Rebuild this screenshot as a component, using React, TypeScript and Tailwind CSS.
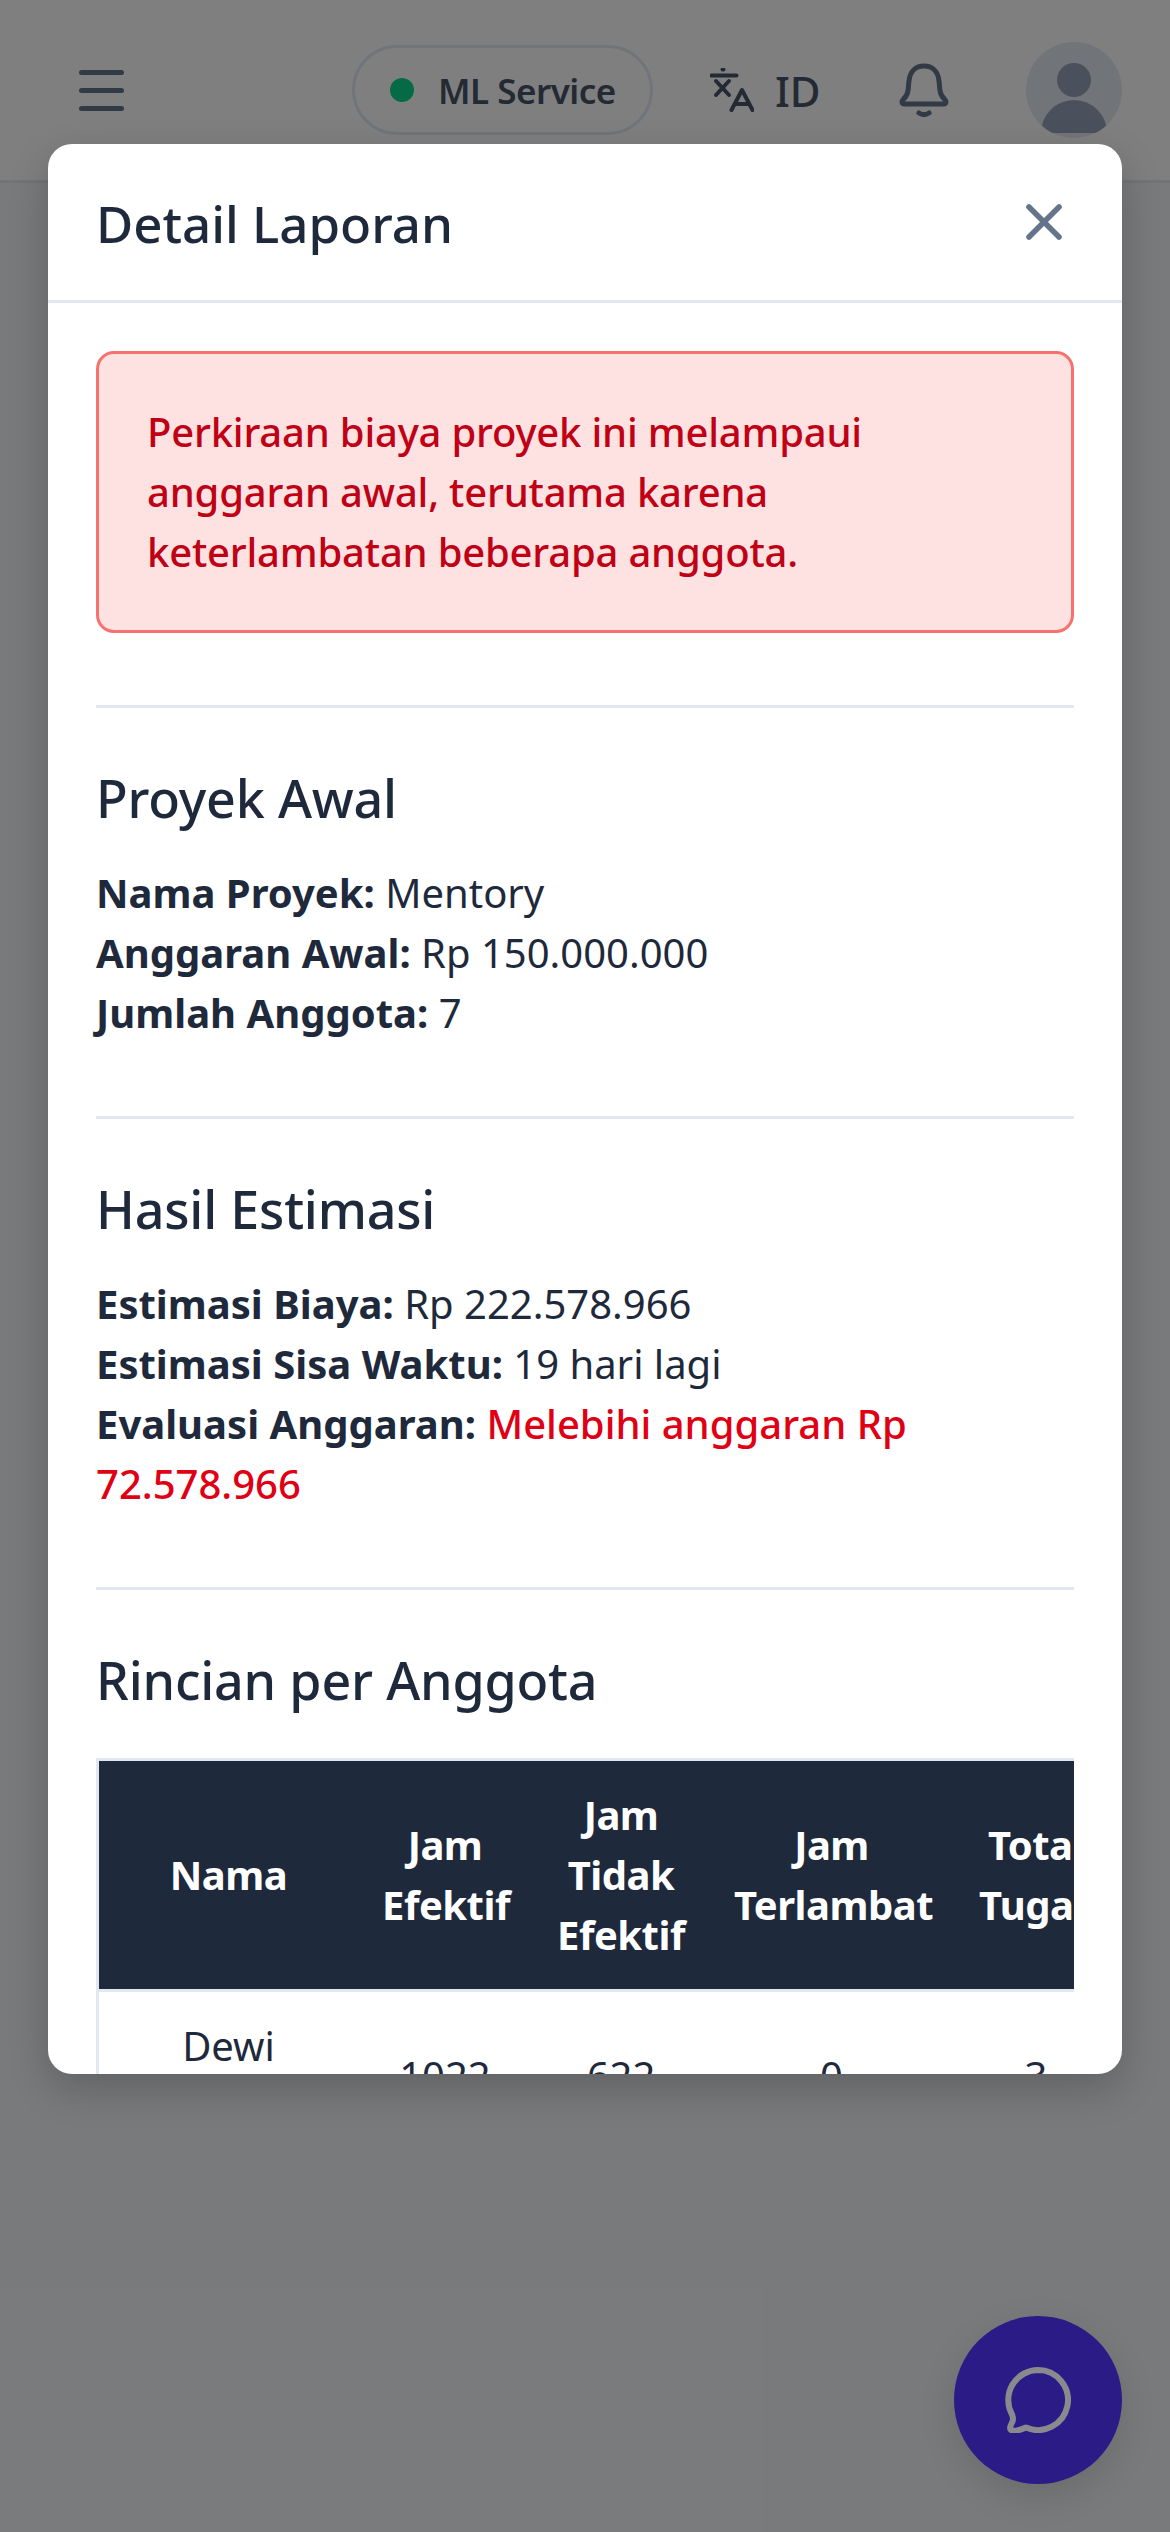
import { X } from "lucide-react";

const TranslateIcon = () => (
  <svg viewBox="0 0 44 44" className="w-[44px] h-[44px]" fill="none" stroke="currentColor" strokeWidth="4" strokeLinecap="round" strokeLinejoin="round">
    <path d="M1.5 7.5h25" />
    <path d="M12.5 1.5h1" />
    <path d="M6 13l13 14" />
    <path d="M19 13L6 27" />
    <path d="M21.5 42L32 22l10.5 20" />
    <path d="M25 36h14" />
  </svg>
);

const BellIcon = () => (
  <svg viewBox="0 0 50 55" className="w-[50px] h-[55px]" fill="none" stroke="currentColor" strokeWidth="5" strokeLinecap="round" strokeLinejoin="round">
    <path d="M3 39c0-2 2-3 4-6 3-4 2-9 3-15C11 8 17 3 25 3s14 5 15 15c1 6 0 11 3 15 2 3 4 4 4 6 0 1-1 2-2 2H5c-1 0-2-1-2-2z" />
    <path d="M20 50c3 2 7 2 10 0" />
  </svg>
);

const ChatIcon = () => (
  <svg viewBox="0 0 66 66" className="w-[66px] h-[66px]" fill="none" stroke="#8a8a8e" strokeWidth="6" strokeLinecap="round" strokeLinejoin="round">
    <path d="M33 3a30 30 0 1 1-12 57.5c-5 2-9 4-14 3-3-1-2-4 0-8 2-3 1-5 0-8A30 30 0 0 1 33 3z" />
  </svg>
);

const Avatar = () => (
  <div className="w-[96px] h-[96px] rounded-full bg-[#e2e8f0] overflow-hidden flex flex-col items-center">
    <div className="w-[34px] h-[34px] rounded-full bg-[#94a3b8] mt-[21px]" />
    <div className="w-[66px] h-[33px] rounded-t-full bg-[#94a3b8] mt-[3px]" />
  </div>
);

const Section = ({ title, children }: { title: string; children: React.ReactNode }) => (
  <section>
    <hr className="border-0 h-[3px] bg-[#e2e8f0]" />
    <h2 className="mt-[60px] mb-[35px] text-[52px] leading-[60px] tracking-[-0.2px] font-medium text-[#1e293b]">{title}</h2>
    {children}
    <div className="h-[73px]" />
  </section>
);

const Line = ({ label, children }: { label: string; children: React.ReactNode }) => (
  <p className="text-[40px] leading-[60px] text-[#1e293b]">
    <strong className="font-bold">{label}</strong> {children}
  </p>
);

export default function App() {
  return (
    <div className="relative w-[1170px] h-[2532px] overflow-hidden bg-[#f1f5f9] [font-family:'Noto_Sans',sans-serif]">
      <nav className="h-[183px] bg-white border-b-[3px] border-[#e2e8f0] flex items-center pl-[79px] pr-[48px]">
        <div className="flex flex-col gap-[13px] w-[45px]">
          <span className="h-[5px] bg-[#64748b] rounded-full" />
          <span className="h-[5px] bg-[#64748b] rounded-full" />
          <span className="h-[5px] bg-[#64748b] rounded-full" />
        </div>
        <div className="ml-[228px] h-[90px] w-[301px] rounded-full border-[3px] border-[#e2e8f0] flex items-center pl-[35px] gap-[24px]">
          <span className="w-[24px] h-[24px] rounded-full bg-[#0ad68c]" />
          <span className="pt-[3px] text-[35px] font-semibold tracking-[-0.5px] text-[#475569]">ML Service</span>
        </div>
        <div className="ml-[57px] w-[115px] flex items-center gap-[21px] text-[#475569]">
          <TranslateIcon />
          <span className="text-[42px] font-medium">ID</span>
        </div>
        <div className="ml-[74px] text-[#64748b]">
          <BellIcon />
        </div>
        <div className="ml-auto">
          <Avatar />
        </div>
      </nav>

      {/* backdrop */}
      <div className="absolute inset-0 bg-black/50" />

      <button className="absolute right-[48px] bottom-[48px] w-[168px] h-[168px] rounded-full bg-[#2a1b87] shadow-[0_12px_36px_rgba(0,0,0,0.12)] flex items-center justify-center">
        <ChatIcon />
      </button>

      {/* modal */}
      <div className="absolute left-[48px] top-[144px] w-[1074px] h-[1930px] bg-white rounded-[24px] overflow-hidden shadow-[0_15px_40px_rgba(0,0,0,0.2)] flex flex-col">
        <header className="h-[159px] shrink-0 border-b-[3px] border-[#e2e8f0] px-[48px] flex items-center justify-between">
          <h1 className="pt-[2px] text-[51px] font-medium text-[#1e293b]">Detail Laporan</h1>
          <X className="w-[60px] h-[60px] text-[#64748b]" strokeWidth={2.2} />
        </header>

        <div className="px-[48px] pt-[48px]">
          <div className="border-[3px] border-[#f87171] bg-[#fee2e2] rounded-[18px] p-[48px] text-[40px] leading-[60px] tracking-[-0.2px] font-medium text-[#c00015] mb-[72px]">
            Perkiraan biaya proyek ini melampaui anggaran awal, terutama karena keterlambatan beberapa anggota.
          </div>

          <Section title="Proyek Awal">
            <Line label="Nama Proyek:">Mentory</Line>
            <Line label="Anggaran Awal:">Rp 150.000.000</Line>
            <Line label="Jumlah Anggota:">7</Line>
          </Section>

          <Section title="Hasil Estimasi">
            <Line label="Estimasi Biaya:">Rp 222.578.966</Line>
            <Line label="Estimasi Sisa Waktu:">19 hari lagi</Line>
            <Line label="Evaluasi Anggaran:">
              <span className="font-medium text-[#e00014]">Melebihi anggaran Rp 72.578.966</span>
            </Line>
          </Section>

          <hr className="border-0 h-[3px] bg-[#e2e8f0]" />
          <h2 className="mt-[60px] mb-[48px] text-[52px] leading-[60px] tracking-[-0.2px] font-medium text-[#1e293b]">Rincian per Anggota</h2>

          <div className="overflow-hidden">
            <table className="table-fixed w-[1023px] border-separate border-spacing-0 text-[40px] leading-[60px] text-center text-[#1e293b]">
              <colgroup>
                <col className="w-[262px]" />
                <col className="w-[174px]" />
                <col className="w-[178px]" />
                <col className="w-[243px]" />
                <col className="w-[166px]" />
              </colgroup>
              <thead className="text-white">
                <tr className="tracking-[-0.5px]">
                  <th className="bg-[#1e293b] border-y-[3px] border-l-[3px] border-[#e2e8f0] p-[24px]">Nama</th>
                  <th className="bg-[#1e293b] border-y-[3px] border-[#e2e8f0] p-[24px]">Jam Efektif</th>
                  <th className="bg-[#1e293b] border-y-[3px] border-[#e2e8f0] p-[24px]">Jam Tidak Efektif</th>
                  <th className="bg-[#1e293b] border-y-[3px] border-[#e2e8f0] p-[24px]">Jam Terlambat</th>
                  <th className="bg-[#1e293b] border-y-[3px] border-[#e2e8f0] p-[24px]">Total Tugas</th>
                </tr>
              </thead>
              <tbody>
                <tr>
                  <td className="border-l-[3px] border-[#e2e8f0] p-[24px]">Dewi Lestari</td>
                  <td className="p-[24px]">1022</td>
                  <td className="p-[24px]">622</td>
                  <td className="p-[24px]">0</td>
                  <td className="p-[24px]">3</td>
                </tr>
              </tbody>
            </table>
          </div>
        </div>
      </div>
    </div>
  );
}
